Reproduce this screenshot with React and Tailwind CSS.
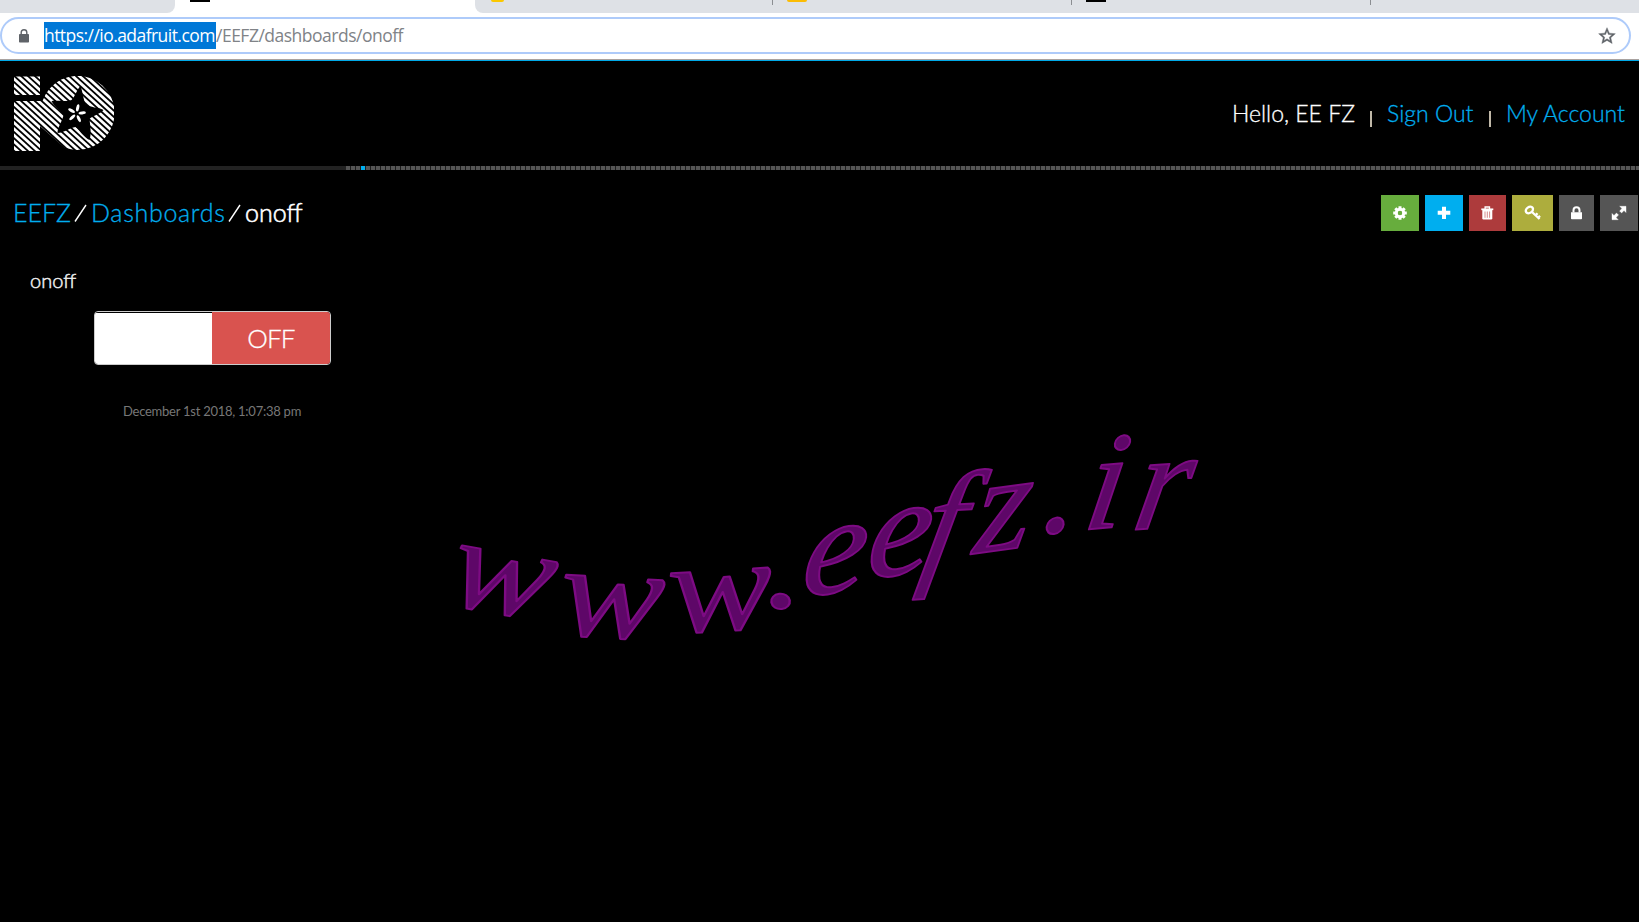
import React from "react";

const stripes = Array.from({ length: 36 }, (_, i) => i);

function Logo() {
  return (
    <svg width="100" height="75" viewBox="0 0 100 75" className="block">
      <defs>
        <clipPath id="io">
          <path d="M0 .5h26V19H0zM0 25h28.500a37 37 0 1 1 22 46.500L26 50v25H0z" />
        </clipPath>
      </defs>
      <g clipPath="url(#io)" stroke="#fff" strokeWidth="2.850">
        {stripes.map((i) => (
          <path key={i} d={`M-10 ${-112.5 + i * 6.25}l125 114`} />
        ))}
      </g>
      <path
        fill="#000"
        d="M66.500 10c2 5 3 14 5 18 5 4 13 3 18 6-3 4-12 6-14 9 1 9 2 15 0 21-5-2-10-10-14-13-6 1-12 6-18 6 0-6 5-12 6-18-3-5-10-9-12-14 7-1 14 1 20-1 4-4 5-10 9-14z"
      />
      <g fill="#fff">
        {[12, 84, 156, 228, 300].map((a) => (
          <ellipse key={a} cx="62.500" cy="31.800" rx="1.500" ry="3.700" transform={`rotate(${a} 62.500 37.500)`} />
        ))}
      </g>
    </svg>
  );
}

const icons = {
  gear: (
    <g>
      <circle cx="7" cy="7" r="3.700" fill="none" stroke="#fff" strokeWidth="3" />
      <path stroke="#fff" strokeWidth="3" d="M7 .2v3M7 10.800v3M.2 7h3M10.800 7h3M2.300 2.300l2 2M9.700 9.700l2 2M11.700 2.300l-2 2M4.300 9.700l-2 2" />
      <circle cx="7" cy="7" r="2.100" fill="#67ad3d" />
    </g>
  ),
  plus: <path stroke="#fff" strokeWidth="4" strokeLinejoin="round" d="M7 .7v12.200M.7 6.800h12.600" />,
  trash: (
    <g fill="none" stroke="#fff">
      <path d="M.3 3.300h12" strokeWidth="1.700" />
      <path d="M4.100 3V1h4.400v2" strokeWidth="1.300" />
      <path d="M1.300 4h10v8.200q0 1.300-1.200 1.300H2.500q-1.200 0-1.200-1.300z" fill="#fff" stroke="none" />
      <path d="M4 5.500v6.300M6.300 5.500v6.300M8.600 5.500v6.300" stroke="#d58d8d" />
    </g>
  ),
  key: (
    <g fill="none" stroke="#fff">
      <ellipse cx="3.400" cy="4" rx="3.900" ry="2.900" strokeWidth="2.300" transform="rotate(-35 3.400 4)" />
      <path d="M6 6l7.500 7M9.300 9.600l2.200-2.300M12 12l2-2.100" strokeWidth="2.300" />
    </g>
  ),
  lock: (
    <g>
      <path d="M1 6.200h11v6.300q0 .8-.8.8H1.800q-.8 0-.8-.8z" fill="#fff" />
      <path d="M3.500 6.500V4.300a3 3 0 0 1 6 0v2.200" fill="none" stroke="#fff" strokeWidth="2" />
    </g>
  ),
  expand: (
    <path d="M7.700.3H14v6.200l-2-2-2.400 2.400-2-2L10 2.500zM0 7.500l2 2 2.500-2.400 2 2L4 11.500l2.200 2.200H0z" fill="#fff" stroke="#fff" strokeWidth=".4" />
  ),
};

const actions = [
  ["gear", "w-[38px] bg-[#67ad3d]"],
  ["plus", "w-[38px] bg-[#00aeef]"],
  ["trash", "w-[37px] bg-[#ad3b3c]"],
  ["key", "w-[41px] bg-[#adad3d]"],
  ["lock", "w-[35px] bg-[#555]"],
  ["expand", "w-[38px] bg-[#555]"],
];

function TabStrip() {
  return (
    <div className="flex h-[13px] items-start bg-white">
      <div className="h-[13px] w-[175px] rounded-br-lg bg-[#dee1e6]" />
      <div className="ml-[15px] h-[2px] w-5 bg-black" />
      <div className="ml-[265px] flex h-[13px] flex-1 items-start rounded-bl-lg bg-[#dee1e6]">
        <div className="ml-[16px] h-[2px] w-[13px] rounded-b-full bg-[#fbc800]" />
        <div className="ml-[268px] h-[5px] w-px bg-[#8b8e92]" />
        <div className="ml-[14px] h-[2px] w-5 rounded-b-sm bg-[#fbbc04]" />
        <div className="ml-[264px] h-[5px] w-px bg-[#8b8e92]" />
        <div className="ml-[14px] h-[2px] w-5 bg-black" />
        <div className="ml-[264px] h-[5px] w-px bg-[#8b8e92]" />
      </div>
    </div>
  );
}

function AddressBar() {
  return (
    <div className="flex h-[48px] flex-col border-b border-[#00a9e8] bg-white">
      <div className="mt-[4px] flex h-[37px] w-[1631px] items-center rounded-full border-2 border-[#aecbfa] pl-[17px] pr-[12px]">
        <svg width="10" height="14" viewBox="0 0 10 14" className="mt-px shrink-0">
          <path d="M.8 5h8.400q.8 0 .8.800v6.900q0 .8-.8.800H.8q-.8 0-.8-.8V5.800Q0 5 .8 5z" fill="#5f6368" />
          <path d="M2.200 5.500V3.500a2.800 2.800 0 0 1 5.600 0v2" fill="none" stroke="#5f6368" strokeWidth="1.400" />
        </svg>
        <div className="ml-[15px] flex h-[27px] items-center whitespace-nowrap font-['Open_Sans','Noto_Sans',sans-serif] text-[17.5px] font-normal leading-[27px]">
          <span className="w-[172px] bg-[#0078d7] tracking-[-0.55px] text-white">https://io.adafruit.com</span>
          <span className="tracking-[-0.5px] text-[#808387]">/EEFZ/dashboards/onoff</span>
        </div>
        <svg width="20" height="20" viewBox="0 0 24 24" className="ml-auto" fill="#5f6368" stroke="#5f6368" strokeWidth=".5">
          <path d="M22 9.240l-7.190-.62L12 2 9.190 8.630 2 9.240l5.460 4.730L5.820 21 12 17.270 18.180 21l-1.630-7.030L22 9.240zM12 15.400l-3.760 2.270 1-4.280-3.320-2.880 4.380-.38L12 6.100l1.710 4.040 4.380.38-3.320 2.880 1 4.280L12 15.400z" />
        </svg>
      </div>
      <div className="mt-auto h-px bg-[#a9a29f]" />
    </div>
  );
}

const stretch = (xs, ys, scale, skew) => xs.map((x, i) => (x + skew * ys[i]) / scale).join(" ");

function Watermark() {
  const headX = [443, 557, 672, 766];
  const headY = [603, 634, 633, 609];
  const tailX = [800, 865, 917, 972, 1040, 1081, 1130];
  const tailY = [597, 579, 570, 554, 534, 530, 530];
  return (
    <svg
      width="900"
      height="420"
      viewBox="400 320 900 420"
      fill="#5e0768"
      stroke="#7d0b83"
      strokeWidth="2"
      strokeLinejoin="round"
      className="pointer-events-none absolute left-[400px] top-[320px] font-['Liberation_Serif',serif] font-normal italic"
    >
      <text
        x={stretch(headX, headY, 1.2, 0)}
        y={headY.join(" ")}
        rotate="12 4 -4 -8"
        transform="scale(1.2 1)"
        className="text-[130px]"
      >
        www.
      </text>
      <text
        x={stretch(tailX, tailY, 1, 0.25)}
        y={tailY.join(" ")}
        rotate="-8 -8 -3 -8 -8 -5 -4"
        transform="matrix(1 0 -0.25 1 0 0)"
        className="text-[140px]"
      >
        eefz.ir
      </text>
    </svg>
  );
}

function Slash() {
  return (
    <svg width="13" height="18" viewBox="0 0 13 18" className="ml-px mr-[4px]">
      <path d="M1 17.500L12 1" stroke="#fff" strokeWidth="1.400" />
    </svg>
  );
}

export default function App() {
  return (
    <div className="relative h-[922px] w-[1639px] overflow-hidden bg-black font-['Lato',sans-serif] font-light text-white">
      <TabStrip />
      <AddressBar />
      <header className="flex h-[105px] justify-between pl-[14px] pr-[14px] pt-[15px]">
        <Logo />
        <nav className="flex h-[75px] items-center whitespace-nowrap text-[23px] [-webkit-text-stroke:0.3px]">
          <span className="w-[125px]">Hello, EE FZ</span>
          <span className="ml-[13px] mt-[10px] h-4 w-[2px] bg-[#c0b8a8]" />
          <a className="ml-[15px] w-[87px] text-[#00aeef]">Sign Out</a>
          <span className="ml-[15px] mt-[10px] h-4 w-[2px] bg-[#c0b8a8]" />
          <a className="ml-[15px] w-[119px] text-[#00aeef]">My Account</a>
        </nav>
      </header>
      <div className="flex h-1">
        <div className="w-[346px] bg-[#222]" />
        <div className="w-[15px] bg-[repeating-linear-gradient(90deg,#555_0_4px,#1c1c1c_4px_5px)]" />
        <div className="w-[4px] bg-[#00aeef]" />
        <div className="w-px bg-[#1c1c1c]" />
        <div className="flex-1 bg-[repeating-linear-gradient(90deg,#555_0_4px,#1c1c1c_4px_5px)]" />
      </div>
      <div className="mt-[25px] flex h-9 justify-between pl-[13px] pr-px">
        <div className="flex items-center whitespace-nowrap text-[25px] [-webkit-text-stroke:0.3px]">
          <a className="w-[60px] text-[#00aeef]">EEFZ</a>
          <Slash />
          <a className="w-[136px] tracking-[0.7px] text-[#00aeef]">Dashboards</a>
          <Slash />
          <span className="[-webkit-text-stroke:0.6px]">onoff</span>
        </div>
        <div className="flex gap-[6px]">
          {actions.map(([name, style]) => (
            <button key={name} className={`flex items-center justify-center ${style}`}>
              <svg width="14" height="14" viewBox="0 0 14 14" className="overflow-visible">{icons[name]}</svg>
            </button>
          ))}
        </div>
      </div>
      <section className="flex w-[346px] flex-col pt-[35px]">
        <h2 className="ml-[30px] text-[20px] font-light leading-[28px] text-[#eee] [-webkit-text-stroke:0.5px]">onoff</h2>
        <div className="ml-[94px] mt-[17px] flex h-[54px] w-[237px] overflow-hidden rounded-[4px] border border-[#ccc]">
          <div className="w-[117px] border-t border-black bg-white" />
          <div className="flex flex-1 items-center justify-center bg-[#d9534f] text-[26px] tracking-[-0.8px] [-webkit-text-stroke:0.3px]">OFF</div>
        </div>
        <time className="ml-[123px] mt-[36px] whitespace-nowrap text-[13px] font-normal leading-[20px] tracking-[-0.25px] text-[#777]">
          December 1st 2018, 1:07:38 pm
        </time>
      </section>
      <Watermark />
    </div>
  );
}
